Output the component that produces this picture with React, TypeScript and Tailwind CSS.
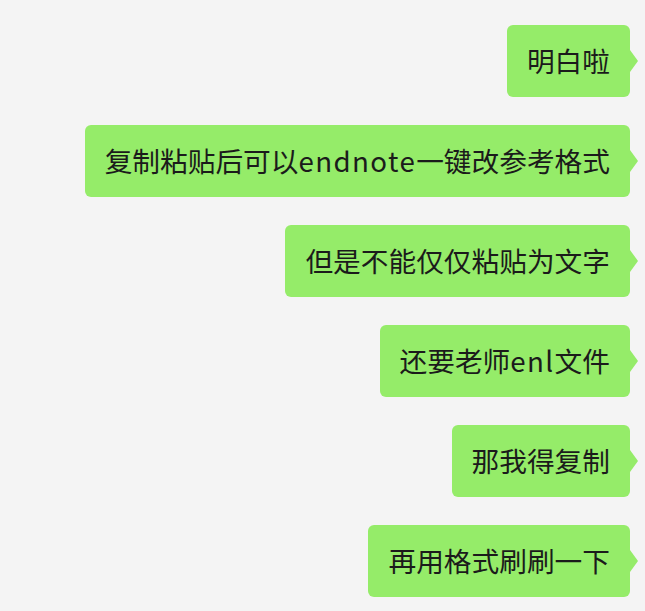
const messages: (string | [string, string, string])[] = [
  "明白啦",
  ["复制粘贴后可以", "endnote", "一键改参考格式"],
  "但是不能仅仅粘贴为文字",
  ["还要老师", "enl", "文件"],
  "那我得复制",
  "再用格式刷刷一下",
];

function Bubble({ msg }: { msg: string | [string, string, string] }) {
  return (
    <div className="relative flex h-[72px] items-center rounded-[6px] bg-[#95ec69] px-[20px] text-[27.7px] leading-none text-[#1b1b1b]">
      {typeof msg === "string" ? (
        <span>{msg}</span>
      ) : (
        <span>
          {msg[0]}
          <span className="tracking-[1.4px]">{msg[1]}</span>
          {msg[2]}
        </span>
      )}
      <div className="absolute right-[-8px] top-1/2 h-0 w-0 -translate-y-1/2 border-y-[11px] border-l-[8px] border-y-transparent border-l-[#95ec69]" />
    </div>
  );
}

export default function App() {
  return (
    <div
      className="flex min-h-[611px] w-full flex-col items-end gap-[28px] bg-[#f4f4f4] pr-[15px] pt-[25px] pb-[14px]"
      style={{ fontFamily: '"Noto Sans CJK SC", "Noto Sans", sans-serif' }}
    >
      {messages.map((m, i) => (
        <Bubble key={i} msg={m} />
      ))}
    </div>
  );
}
